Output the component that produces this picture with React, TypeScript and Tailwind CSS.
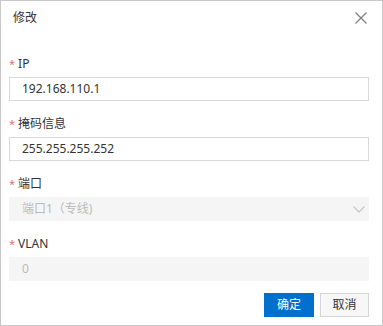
const font = { fontFamily: '"Noto Sans", "Noto Sans CJK SC", sans-serif' };

function Label({ text }: { text: string }) {
  return (
    <div className="h-[20px] flex items-center text-[12px] text-[#333] leading-none">
      <span className="text-[#f56c6c] mr-[3px] text-[11px] translate-y-[-1px]">*</span>
      {text}
    </div>
  );
}

export default function App() {
  return (
    <div
      style={font}
      className="w-[383px] h-[326px] border border-[#c8c8c8] bg-white flex flex-col"
    >
      {/* header */}
      <div className="h-[33px] flex items-center justify-between pl-[12px] pr-[15px]">
        <span className="text-[12px] text-[#333]">修改</span>
        <svg width="12" height="12" viewBox="0 0 12 12" className="mt-[1px]">
          <path d="M0.5 0.5 L11.5 11.5 M11.5 0.5 L0.5 11.5" stroke="#808080" strokeWidth="1.3" fill="none" />
        </svg>
      </div>

      {/* body */}
      <div className="flex flex-col pt-[20px] pl-[8px] pr-[13px]">
        <Label text="IP" />
        <div className="mt-[3px] h-[24px] border border-[#d9d9d9] flex items-center px-[12px] text-[12px] text-[#333]">
          192.168.110.1
        </div>

        <div className="mt-[13px]">
          <Label text="掩码信息" />
        </div>
        <div className="mt-[3px] h-[24px] border border-[#d9d9d9] flex items-center px-[12px] text-[12px] text-[#333]">
          255.255.255.252
        </div>

        <div className="mt-[13px]">
          <Label text="端口" />
        </div>
        <div className="mt-[3px] h-[24px] bg-[#f5f5f5] flex items-center justify-between pl-[13px] pr-[4px] text-[12px] text-[#bbb]">
          <span>端口1（专线)</span>
          <svg width="12" height="7" viewBox="0 0 12 7">
            <path d="M0.5 0.5 L6 6 L11.5 0.5" stroke="#c8c8c8" strokeWidth="1.3" fill="none" />
          </svg>
        </div>

        <div className="mt-[13px]">
          <Label text="VLAN" />
        </div>
        <div className="mt-[3px] h-[24px] bg-[#f5f5f5] flex items-center px-[13px] text-[12px] text-[#bbb]">
          0
        </div>

        {/* footer */}
        <div className="mt-[12px] flex justify-end gap-[6px]">
          <button className="w-[50px] h-[24px] bg-[#0070cc] text-white text-[12px]">确定</button>
          <button className="w-[49px] h-[24px] bg-[#f7f7f7] border border-[#d5d5d5] text-[#333] text-[12px]">
            取消
          </button>
        </div>
      </div>
    </div>
  );
}
